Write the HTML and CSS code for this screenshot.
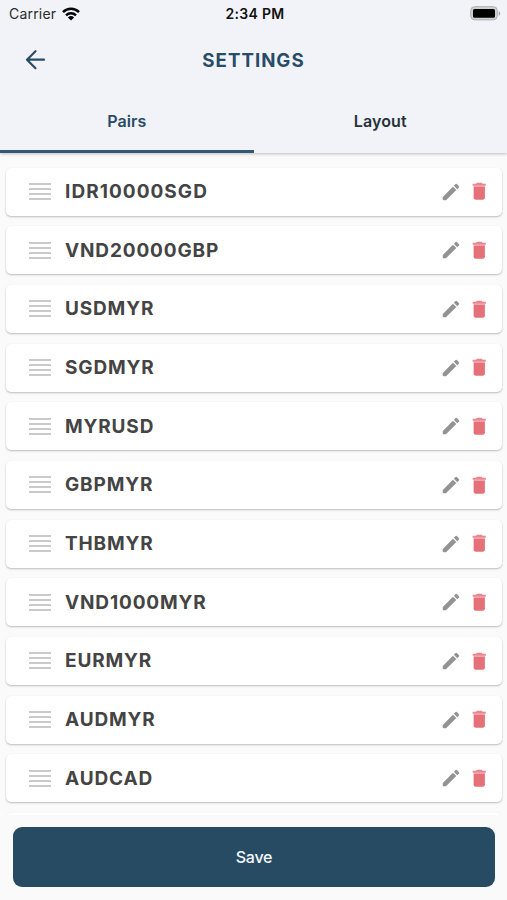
FILE: index.html
```html
<!DOCTYPE html>
<html lang="en">
<head>
<meta charset="utf-8">
<title>Settings</title>
<link rel="stylesheet" href="styles.css">
</head>
<body>
<svg width="0" height="0" class="sprite" aria-hidden="true">
  <symbol id="edit" viewBox="0 0 24 24"><path d="M3 17.9V20.1q0 .9.9.9H6.1q.4 0 .7-.3L17.8 9.9l-3.7-3.7L3.3 17.2q-.3.3-.3.7zM20.7 7a1 1 0 0 0 0-1.4l-2.3-2.3a1 1 0 0 0-1.4 0l-1.9 1.9 3.7 3.7z"/></symbol>
  <symbol id="trash" viewBox="0 0 24 24"><path d="M6 19c0 1.100.9 2 2 2h8c1.100 0 2-.9 2-2V7H6z"/><path fill-opacity=".85" d="M19 4h-3.500l-1-1h-5l-1 1H5v2h14z"/><path fill-opacity=".5" d="M6 6h12v1H6z"/></symbol>
</svg>
<header class="header">
  <div class="status">
    <div class="carrier"><span>Carrier</span>
      <svg width="18" height="14" viewBox="0 0 18 14"><g fill="none" stroke="#050505" stroke-width="2.500"><path d="M1 5.100a11.500 11.500 0 0 1 16 0"/><path d="M4 8.300a7.300 7.300 0 0 1 10 0"/></g><path d="M5.900 10.400a4.500 4.500 0 0 1 6.200 0L9 13.500z" fill="#050505"/></svg>
    </div>
    <div class="time">2:34 PM</div>
    <svg class="battery" width="31" height="15" viewBox="0 0 31 15"><rect x=".7" y=".7" width="26.600" height="13.200" rx="4" fill="#d0d0d1" stroke="#b0b0b2"/><rect x="3" y="3" width="22" height="8.800" rx="1.500" fill="#000"/><path d="M28.700 5v5q1.600-.8 1.600-2.500T28.700 5z" fill="#aaaaac"/></svg>
  </div>
  <div class="bar">
    <svg class="back" width="22" height="22" viewBox="0 0 22 22" fill="none" stroke="#284b66" stroke-width="2.200" stroke-linecap="round" stroke-linejoin="round"><path d="M20 10.700H3M11.500 2.200L3 10.700l8.500 8.500"/></svg>
    <h1>SETTINGS</h1>
  </div>
  <nav class="tabs"><div class="tab active">Pairs</div><div class="tab">Layout</div></nav>
</header>
<main class="list">
  <div class="card"><i class="grip"></i><span class="name wide">IDR10000SGD</span><svg class="edit"><use href="#edit"/></svg><svg class="trash"><use href="#trash"/></svg></div>
  <div class="card"><i class="grip"></i><span class="name">VND20000GBP</span><svg class="edit"><use href="#edit"/></svg><svg class="trash"><use href="#trash"/></svg></div>
  <div class="card"><i class="grip"></i><span class="name">USDMYR</span><svg class="edit"><use href="#edit"/></svg><svg class="trash"><use href="#trash"/></svg></div>
  <div class="card"><i class="grip"></i><span class="name">SGDMYR</span><svg class="edit"><use href="#edit"/></svg><svg class="trash"><use href="#trash"/></svg></div>
  <div class="card"><i class="grip"></i><span class="name">MYRUSD</span><svg class="edit"><use href="#edit"/></svg><svg class="trash"><use href="#trash"/></svg></div>
  <div class="card"><i class="grip"></i><span class="name">GBPMYR</span><svg class="edit"><use href="#edit"/></svg><svg class="trash"><use href="#trash"/></svg></div>
  <div class="card"><i class="grip"></i><span class="name">THBMYR</span><svg class="edit"><use href="#edit"/></svg><svg class="trash"><use href="#trash"/></svg></div>
  <div class="card"><i class="grip"></i><span class="name">VND1000MYR</span><svg class="edit"><use href="#edit"/></svg><svg class="trash"><use href="#trash"/></svg></div>
  <div class="card"><i class="grip"></i><span class="name">EURMYR</span><svg class="edit"><use href="#edit"/></svg><svg class="trash"><use href="#trash"/></svg></div>
  <div class="card"><i class="grip"></i><span class="name">AUDMYR</span><svg class="edit"><use href="#edit"/></svg><svg class="trash"><use href="#trash"/></svg></div>
  <div class="card"><i class="grip"></i><span class="name">AUDCAD</span><svg class="edit"><use href="#edit"/></svg><svg class="trash"><use href="#trash"/></svg></div>
  <div class="card"></div>
</main>
<footer class="footer"><button class="save">Save</button></footer>
</body>
</html>
```
FILE: styles.css
```css
* { box-sizing: border-box; }
body {
  margin: 0;
  height: 900px;
  overflow: hidden;
  display: flex;
  flex-direction: column;
  background: #fafafa;
  font-family: Inter, "Liberation Sans", sans-serif;
}
.sprite { position: absolute; }
.header {
  flex: none;
  height: 153px;
  background: #f1f3f8;
  box-shadow: 0 1px 3px rgba(0, 0, 0, .24);
}
.status {
  height: 27px;
  padding: 0 6px 0 9px;
  display: grid;
  grid-template-columns: 1fr auto 1fr;
  align-items: center;
  font-size: 14px;
  color: #2b2b2d;
}
.carrier { display: flex; align-items: center; gap: 6px; letter-spacing: .2px; }
.time { font-size: 14px; font-weight: 600; color: #111; letter-spacing: .3px; }
.battery { justify-self: end; }
.bar {
  height: 65px;
  padding: 0 24px;
  display: grid;
  grid-template-columns: 22px 1fr 22px;
  align-items: center;
}
h1 {
  margin: 0;
  padding-top: 1px;
  text-align: center;
  font-size: 18.700px;
  font-weight: 650;
  letter-spacing: 1px;
  color: #284b66;
}
.tabs { display: flex; height: 61px; }
.tab {
  flex: 1;
  line-height: 58px;
  text-align: center;
  font-size: 16px;
  font-weight: 600;
  letter-spacing: .1px;
  color: #263238;
}
.active { color: #284b66; border-bottom: 3px solid #315875; }
.list {
  flex: 1;
  min-height: 0;
  overflow: hidden;
  padding: 14.600px 5px 0 6px;
  display: flex;
  flex-direction: column;
  gap: 10.670px;
}
.card {
  flex: none;
  height: 48px;
  padding: 0 12px 0 23px;
  display: flex;
  align-items: center;
  background: #fff;
  border-radius: 5px;
  box-shadow: 0 1px 2px rgba(0, 0, 0, .26);
}
.grip {
  width: 22px;
  height: 17px;
  background: repeating-linear-gradient(#cacaca 0 2px, transparent 2px 5px);
}
.name {
  flex: 1;
  margin-left: 14px;
  font-size: 19px;
  font-weight: 650;
  letter-spacing: .85px;
  color: #444;
}
.wide { letter-spacing: 1.050px; }
.edit { width: 22px; height: 22px; fill: #939393; margin-right: 6px; }
.trash { width: 22.500px; height: 22.500px; fill: #e57078; }
.footer { flex: none; height: 85px; padding: 12px 12px 0 13px; background: #fafafa; }
.save {
  display: block;
  width: 100%;
  height: 60px;
  padding: 0;
  border: 0;
  border-radius: 9px;
  background: #284b64;
  color: #f4f7fa;
  font: 500 16px Inter, sans-serif;
  letter-spacing: -.2px;
}
```
